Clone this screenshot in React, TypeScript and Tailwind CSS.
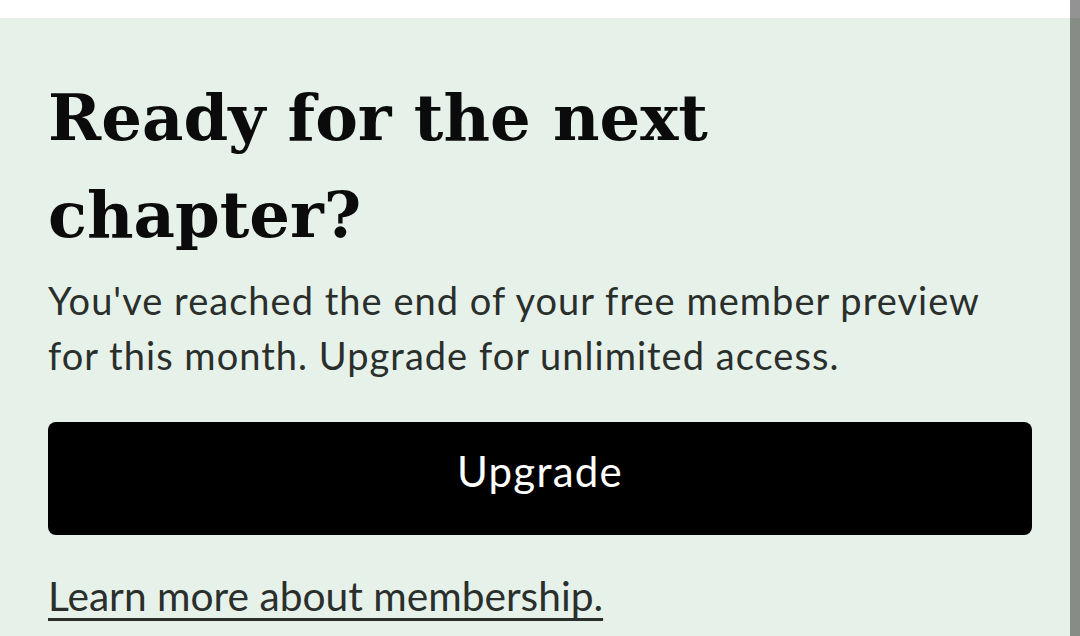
export default function App() {
  return (
    <div className="flex h-[636px] w-[1080px] overflow-hidden">
      <div className="flex flex-1 flex-col">
        <div className="h-[18px] bg-white" />
        <section className="flex-1 bg-[#e6f1ea] pl-[48px] pr-[38px] pt-[51px]">
          <h1 className="font-['DejaVu_Serif',serif] text-[64px] font-bold leading-[97px] text-[#0b0b0b]">
            Ready for the next chapter?
          </h1>
          <p className="mt-[10px] max-w-[990px] font-['Lato',sans-serif] text-[38px] leading-[55px] tracking-[0.027em] text-[#2a2f2c]">
            You've reached the end of your free member preview for this month. Upgrade for unlimited access.
          </p>
          <button className="mt-[39px] flex h-[113px] w-full items-center justify-center rounded-[8px] bg-black pb-[14px] font-['Lato',sans-serif] text-[42px] tracking-[0.03em] text-white">
            Upgrade
          </button>
          <a href="#" className="mt-[37px] block w-fit font-['Lato',sans-serif] text-[40.7px] leading-[48px] text-[#2a2f2c] underline decoration-[3px] underline-offset-[7px]">
            Learn more about membership.
          </a>
        </section>
      </div>
      <div className="flex w-[10px] flex-col">
        <div className="h-[18px] bg-[#939393]" />
        <div className="flex-1 bg-[#878c87]" />
      </div>
    </div>
  );
}
